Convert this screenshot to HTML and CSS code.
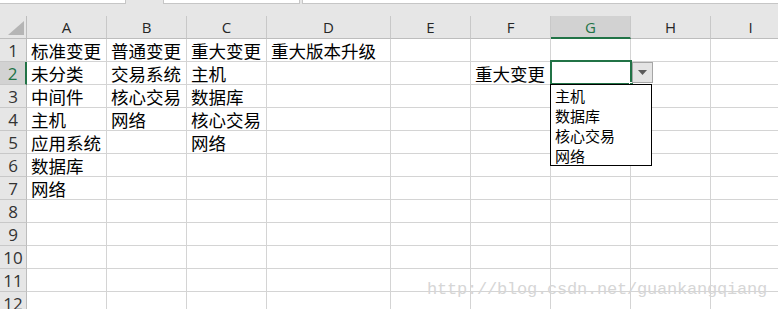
FILE: index.html
```html
<!DOCTYPE html>
<html lang="zh-CN">
<head>
    <meta charset="UTF-8">
    <title>变更类型</title>
    <link rel="stylesheet" href="styles.css">
</head>
<body>
    <div class="sheet">
        <div class="tabs">
            <div class="tab tab-first"></div>
            <div class="tab tab-second"></div>
            <div class="tab tab-third"></div>
        </div>

        <div class="grid">
            <div class="corner">
                <svg width="16" height="14" viewBox="0 0 16 14"><polygon points="16,0 16,14 0,14" fill="#b5b5b5"/></svg>
            </div>
            <div class="col-head">A</div>
            <div class="col-head">B</div>
            <div class="col-head">C</div>
            <div class="col-head">D</div>
            <div class="col-head">E</div>
            <div class="col-head">F</div>
            <div class="col-head active">G</div>
            <div class="col-head">H</div>
            <div class="col-head">I</div>

            <div class="row-head">1</div>
            <div class="cell">标准变更</div>
            <div class="cell">普通变更</div>
            <div class="cell">重大变更</div>
            <div class="cell">重大版本升级</div>
            <div class="cell"></div>
            <div class="cell"></div>
            <div class="cell"></div>
            <div class="cell"></div>
            <div class="cell"></div>

            <div class="row-head active">2</div>
            <div class="cell">未分类</div>
            <div class="cell">交易系统</div>
            <div class="cell">主机</div>
            <div class="cell"></div>
            <div class="cell"></div>
            <div class="cell">重大变更</div>
            <div class="cell"></div>
            <div class="cell"></div>
            <div class="cell"></div>

            <div class="row-head">3</div>
            <div class="cell">中间件</div>
            <div class="cell">核心交易</div>
            <div class="cell">数据库</div>
            <div class="cell"></div>
            <div class="cell"></div>
            <div class="cell"></div>
            <div class="cell"></div>
            <div class="cell"></div>
            <div class="cell"></div>

            <div class="row-head">4</div>
            <div class="cell">主机</div>
            <div class="cell">网络</div>
            <div class="cell">核心交易</div>
            <div class="cell"></div>
            <div class="cell"></div>
            <div class="cell"></div>
            <div class="cell"></div>
            <div class="cell"></div>
            <div class="cell"></div>

            <div class="row-head">5</div>
            <div class="cell">应用系统</div>
            <div class="cell"></div>
            <div class="cell">网络</div>
            <div class="cell"></div>
            <div class="cell"></div>
            <div class="cell"></div>
            <div class="cell"></div>
            <div class="cell"></div>
            <div class="cell"></div>

            <div class="row-head">6</div>
            <div class="cell">数据库</div>
            <div class="cell"></div>
            <div class="cell"></div>
            <div class="cell"></div>
            <div class="cell"></div>
            <div class="cell"></div>
            <div class="cell"></div>
            <div class="cell"></div>
            <div class="cell"></div>

            <div class="row-head">7</div>
            <div class="cell">网络</div>
            <div class="cell"></div>
            <div class="cell"></div>
            <div class="cell"></div>
            <div class="cell"></div>
            <div class="cell"></div>
            <div class="cell"></div>
            <div class="cell"></div>
            <div class="cell"></div>

            <div class="row-head">8</div>
            <div class="cell"></div>
            <div class="cell"></div>
            <div class="cell"></div>
            <div class="cell"></div>
            <div class="cell"></div>
            <div class="cell"></div>
            <div class="cell"></div>
            <div class="cell"></div>
            <div class="cell"></div>

            <div class="row-head">9</div>
            <div class="cell"></div>
            <div class="cell"></div>
            <div class="cell"></div>
            <div class="cell"></div>
            <div class="cell"></div>
            <div class="cell"></div>
            <div class="cell"></div>
            <div class="cell"></div>
            <div class="cell"></div>

            <div class="row-head">10</div>
            <div class="cell"></div>
            <div class="cell"></div>
            <div class="cell"></div>
            <div class="cell"></div>
            <div class="cell"></div>
            <div class="cell"></div>
            <div class="cell"></div>
            <div class="cell"></div>
            <div class="cell"></div>

            <div class="row-head">11</div>
            <div class="cell"></div>
            <div class="cell"></div>
            <div class="cell"></div>
            <div class="cell"></div>
            <div class="cell"></div>
            <div class="cell"></div>
            <div class="cell"></div>
            <div class="cell"></div>
            <div class="cell"></div>

            <div class="row-head">12</div>
            <div class="cell"></div>
            <div class="cell"></div>
            <div class="cell"></div>
            <div class="cell"></div>
            <div class="cell"></div>
            <div class="cell"></div>
            <div class="cell"></div>
            <div class="cell"></div>
            <div class="cell"></div>
        </div>

        <!-- selected cell G2 with its validation dropdown -->
        <div class="selection"><span class="handle"></span></div>
        <div class="drop-btn">
            <svg width="9" height="5" viewBox="0 0 9 5"><polygon points="0,0 9,0 4.5,5" fill="#5a5a5a"/></svg>
        </div>
        <ul class="drop-list">
            <li>主机</li>
            <li>数据库</li>
            <li>核心交易</li>
            <li>网络</li>
        </ul>

        <div class="watermark">http://blog.csdn.net/guankangqiang</div>
    </div>
</body>
</html>
```

FILE: styles.css
```css
body {
    margin: 0;
    background: #ffffff;
    font-family: "Noto Sans CJK SC", "Noto Sans", sans-serif;
    overflow: hidden;
}
.sheet {
    position: relative;
    width: 778px;
    height: 309px;
    overflow: hidden;
}
.tabs {
    display: flex;
    height: 16px;
    background: #e6e6e6;
}
.tab {
    height: 3px;
    background: #ffffff;
    border: 1px solid #c6c6c6;
    border-top: none;
}
.tab-first {
    width: 125px;
    border-left: none;
}
.tab-second {
    width: 135px;
    margin-left: 37px;
}
.tab-third {
    flex: 1;
    margin-left: 2px;
    border-right: none;
}
.grid {
    display: grid;
    grid-template-columns: 27px 80px 80px 80px 124px 80px 80px 80px 80px 80px;
    grid-auto-rows: 23px;
}
.corner {
    background: #e6e6e6;
    border-right: 1px solid #bdbdbd;
    border-bottom: 1px solid #bdbdbd;
    display: flex;
    justify-content: flex-end;
    align-items: flex-end;
    padding: 0 2px 3px 0;
}
.col-head {
    background: #e6e6e6;
    border-right: 1px solid #c8c8c8;
    border-bottom: 1px solid #bdbdbd;
    font-family: "Open Sans", "Liberation Sans", sans-serif;
    font-size: 15px;
    line-height: 23px;
    color: #262626;
    text-align: center;
}
.col-head.active {
    background: #d2d2d2;
    color: #217346;
    border-bottom: 2px solid #217346;
}
.row-head {
    background: #e6e6e6;
    border-right: 1px solid #bdbdbd;
    border-bottom: 1px solid #c8c8c8;
    font-family: "Open Sans", "Liberation Sans", sans-serif;
    font-size: 17px;
    line-height: 23px;
    color: #333333;
    text-align: center;
}
.row-head.active {
    background: #d2d2d2;
    color: #217346;
    border-right: 2px solid #217346;
}
.cell {
    border-right: 1px solid #d4d4d4;
    border-bottom: 1px solid #d4d4d4;
    padding: 1px 0 0 4px;
    font-size: 17.5px;
    line-height: 22px;
    color: #000000;
    white-space: nowrap;
}
.selection {
    position: absolute;
    left: 550px;
    top: 60px;
    width: 82px;
    height: 25px;
    box-sizing: border-box;
    border: 2px solid #217346;
}
.handle {
    position: absolute;
    right: -4px;
    bottom: -4px;
    width: 5px;
    height: 5px;
    background: #217346;
    border: 1px solid #ffffff;
    box-sizing: border-box;
}
.drop-btn {
    position: absolute;
    left: 632px;
    top: 62px;
    width: 21px;
    height: 21px;
    box-sizing: border-box;
    border: 1px solid #a6a6a6;
    background: #e4e4e4;
    display: flex;
    justify-content: center;
    align-items: center;
}
.drop-list {
    position: absolute;
    left: 550px;
    top: 84px;
    width: 102px;
    height: 82px;
    box-sizing: border-box;
    margin: 0;
    padding: 0;
    list-style: none;
    background: #ffffff;
    border: 1px solid #000000;
}
.drop-list li {
    height: 20px;
    padding: 1px 0 0 4px;
    box-sizing: border-box;
    font-size: 15px;
    line-height: 19px;
    color: #000000;
}
.watermark {
    position: absolute;
    left: 427px;
    top: 280px;
    font-family: "Liberation Mono", monospace;
    font-size: 17px;
    line-height: 20px;
    letter-spacing: -0.2px;
    color: #d6d6d6;
    white-space: nowrap;
}
```
